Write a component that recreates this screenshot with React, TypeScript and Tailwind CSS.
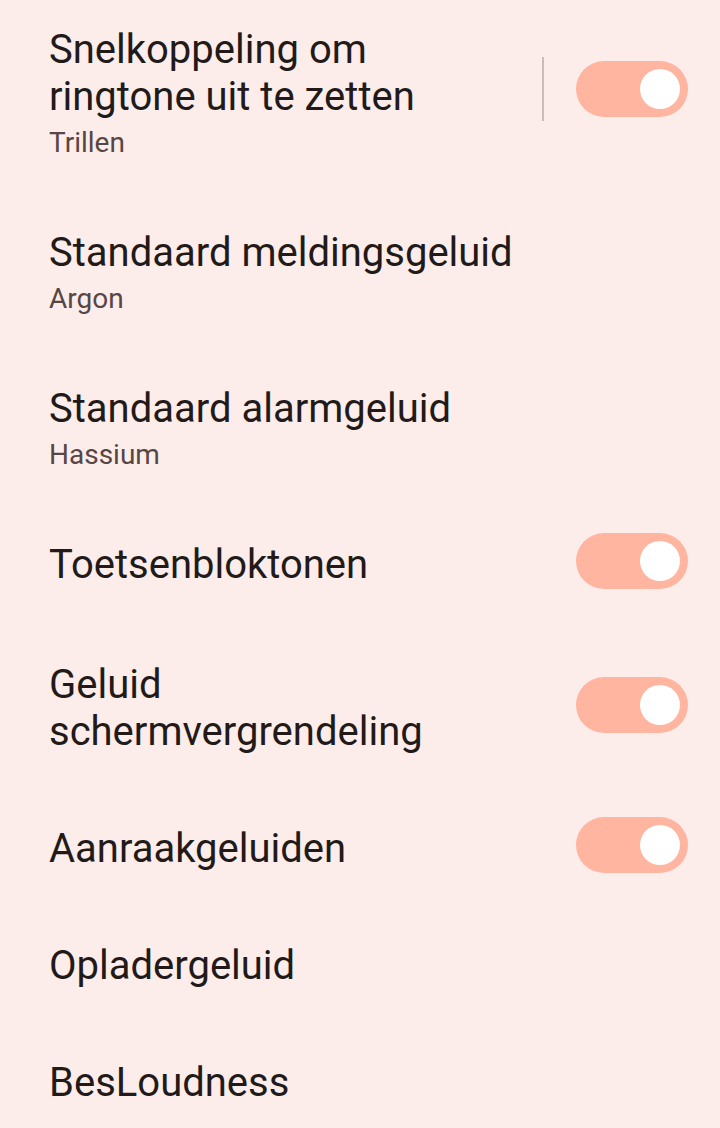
import React from "react";

function Toggle() {
  return (
    <div className="-mb-[4px] -mt-[11px] flex h-[56px] w-[112px] shrink-0 items-center justify-end rounded-full bg-[#ffb59f] pr-[8px]">
      <div className="h-[40px] w-[40px] rounded-full bg-white" />
    </div>
  );
}

type RowProps = {
  title: React.ReactNode;
  summary?: string;
  toggle?: boolean;
  divider?: boolean;
  pad: string;
};

function Row({ title, summary, toggle, divider, pad }: RowProps) {
  return (
    <div className={"flex items-center pl-[49px] pr-[32px] " + pad}>
      <div className="min-w-0 flex-1 pr-[24px]">
        <div className="text-[40px] leading-[47px] text-[#221a19]">{title}</div>
        {summary && (
          <div className="mt-[6px] text-[28px] leading-[33px] text-[#574643]">{summary}</div>
        )}
      </div>
      {divider && <div className="-mb-[4px] -mt-[11px] mr-[32px] h-[64px] w-[2px] bg-[#cdbbb7]" />}
      {toggle && <Toggle />}
    </div>
  );
}

export default function App() {
  return (
    <div
      className="h-[1128px] w-[720px] overflow-hidden bg-[#fcedea]"
      style={{ fontFamily: "Roboto, 'Noto Sans', sans-serif" }}
    >
      <Row
        pad="pt-[26px] pb-[35px]"
        title={
          <>
            Snelkoppeling om
            <br />
            ringtone uit te zetten
          </>
        }
        summary="Trillen"
        divider
        toggle
      />
      <Row pad="py-[35px]" title="Standaard meldingsgeluid" summary="Argon" />
      <Row pad="py-[35px]" title="Standaard alarmgeluid" summary="Hassium" />
      <Row pad="pt-[35px] pb-[38px]" title="Toetsenbloktonen" toggle />
      <Row
        pad="py-[35px]"
        title={
          <>
            Geluid
            <br />
            schermvergrendeling
          </>
        }
        toggle
      />
      <Row pad="py-[35px]" title="Aanraakgeluiden" toggle />
      <Row pad="py-[35px]" title="Opladergeluid" />
      <Row pad="py-[35px]" title="BesLoudness" />
    </div>
  );
}
